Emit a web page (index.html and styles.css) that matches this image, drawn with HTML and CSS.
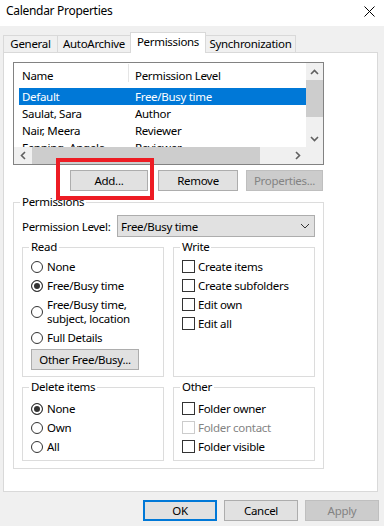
FILE: index.html
```html
<!DOCTYPE html>
<html>

<head>
    <title>Calendar Properties</title>
    <link rel="stylesheet" href="styles.css">
</head>

<body>
    <!-- Title bar -->
    <div class="titlebar">
        <span class="title">Calendar Properties</span>
        <svg class="close" width="11" height="11" viewBox="0 0 11 11">
            <path d="M0.5 0.5 L10.5 10.5 M10.5 0.5 L0.5 10.5" stroke="#000" stroke-width="1" fill="none" />
        </svg>
    </div>

    <!-- Tabs -->
    <div class="tabs">
        <div class="tab tab-general">General</div>
        <div class="tab tab-archive">AutoArchive</div>
        <div class="tab tab-permissions active">Permissions</div>
        <div class="tab tab-sync">Synchronization</div>
    </div>

    <div class="panel">
        <!-- Users list -->
        <div class="listbox">
            <div class="list-area">
                <div class="list-header">
                    <span class="head-name">Name</span>
                    <span class="head-divider"></span>
                    <span class="head-level">Permission Level</span>
                </div>
                <div class="row selected"><span class="col-name">Default</span><span>Free/Busy time</span></div>
                <div class="row"><span class="col-name">Saulat, Sara</span><span>Author</span></div>
                <div class="row"><span class="col-name">Nair, Meera</span><span>Reviewer</span></div>
                <div class="row"><span class="col-name">Fenning, Angela</span><span>Reviewer</span></div>
            </div>
            <div class="vscroll">
                <div class="arrow">
                    <svg width="9" height="6" viewBox="0 0 9 6"><path d="M1 5 L4.5 1.5 L8 5" stroke="#606060" stroke-width="1.6" fill="none" /></svg>
                </div>
                <div class="vthumb"></div>
                <div class="vspace"></div>
                <div class="arrow">
                    <svg width="9" height="6" viewBox="0 0 9 6"><path d="M1 1 L4.5 4.5 L8 1" stroke="#606060" stroke-width="1.6" fill="none" /></svg>
                </div>
            </div>
            <div class="hscroll">
                <div class="arrow">
                    <svg width="6" height="9" viewBox="0 0 6 9"><path d="M5 1 L1.5 4.5 L5 8" stroke="#606060" stroke-width="1.6" fill="none" /></svg>
                </div>
                <div class="hthumb"></div>
                <div class="hspace"></div>
                <div class="arrow">
                    <svg width="6" height="9" viewBox="0 0 6 9"><path d="M1 1 L4.5 4.5 L1 8" stroke="#606060" stroke-width="1.6" fill="none" /></svg>
                </div>
            </div>
            <div class="corner"></div>
        </div>

        <div class="list-buttons">
            <button class="btn btn-add">Add...</button>
            <button class="btn btn-remove">Remove</button>
            <button class="btn btn-props disabled">Properties...</button>
        </div>

        <!-- Highlight round the Add button -->
        <div class="highlight"></div>

        <fieldset class="group group-main">
            <legend>Permissions</legend>
            <div class="level-row">
                <span class="level-label">Permission Level:</span>
                <div class="select">
                    <span>Free/Busy time</span>
                    <svg width="10" height="6" viewBox="0 0 10 6"><path d="M1 1 L5 5 L9 1" stroke="#333" stroke-width="1" fill="none" /></svg>
                </div>
            </div>

            <div class="groups">
                <fieldset class="group group-read">
                    <legend>Read</legend>
                    <div class="opt"><span class="radio"></span>None</div>
                    <div class="opt"><span class="radio checked"></span>Free/Busy time</div>
                    <div class="opt opt-multi"><span class="radio"></span><span>Free/Busy time,<br>subject, location</span></div>
                    <div class="opt"><span class="radio"></span>Full Details</div>
                    <button class="btn btn-other">Other Free/Busy...</button>
                </fieldset>

                <fieldset class="group group-write">
                    <legend>Write</legend>
                    <div class="opt"><span class="check"></span>Create items</div>
                    <div class="opt"><span class="check"></span>Create subfolders</div>
                    <div class="opt"><span class="check"></span>Edit own</div>
                    <div class="opt"><span class="check"></span>Edit all</div>
                </fieldset>

                <fieldset class="group group-small">
                    <legend>Delete items</legend>
                    <div class="opt"><span class="radio checked"></span>None</div>
                    <div class="opt"><span class="radio"></span>Own</div>
                    <div class="opt"><span class="radio"></span>All</div>
                </fieldset>

                <fieldset class="group group-small">
                    <legend>Other</legend>
                    <div class="opt"><span class="check"></span>Folder owner</div>
                    <div class="opt disabled"><span class="check"></span>Folder contact</div>
                    <div class="opt"><span class="check"></span>Folder visible</div>
                </fieldset>
            </div>
        </fieldset>
    </div>

    <!-- Dialog buttons -->
    <div class="footer">
        <button class="btn btn-ok">OK</button>
        <button class="btn">Cancel</button>
        <button class="btn disabled">Apply</button>
    </div>
</body>

</html>
```

FILE: styles.css
```css
body {
    margin: 0;
    width: 384px;
    height: 526px;
    overflow: hidden;
    background-color: #f0f0f0;
    font-family: 'Noto Sans', 'Open Sans', sans-serif;
    font-size: 11.5px;
    letter-spacing: -0.3px;
    color: #000;
}

/* Title bar */
.titlebar {
    height: 26px;
    background-color: #fff;
    display: flex;
    justify-content: space-between;
    align-items: flex-start;
    padding: 3px 9px 0 6px;
    box-sizing: border-box;
}

.title {
    font-size: 12px;
    line-height: 16px;
}

.close {
    margin-top: 3px;
}

/* Tabs */
.tabs {
    display: flex;
    align-items: flex-end;
    height: 19px;
    margin: 7px 0 0 3px;
}

.tab {
    height: 17px;
    box-sizing: border-box;
    border: 1px solid #d9d9d9;
    border-bottom: none;
    background-color: #f0f0f0;
    text-align: center;
    line-height: 16px;
    margin-left: -1px;
}

.tab-general {
    width: 55px;
    margin-left: 0;
}

.tab-archive {
    width: 74px;
}

.tab-permissions {
    width: 76px;
}

.tab-sync {
    width: 91px;
}

.tab.active {
    height: 21px;
    background-color: #fff;
    margin-bottom: -1px;
    line-height: 18px;
    position: relative;
    z-index: 1;
}

/* Main panel */
.panel {
    position: relative;
    height: 440px;
    margin: 0 6px 0 3px;
    box-sizing: border-box;
    border: 1px solid #d9d9d9;
    background-color: #fff;
    padding: 9px 0 0 9px;
}

.listbox {
    width: 311px;
    height: 103px;
    box-sizing: border-box;
    border: 1px solid #828282;
    display: grid;
    grid-template-columns: 292px 17px;
    grid-template-rows: 84px 17px;
}

.list-area {
    overflow: hidden;
    background-color: #fff;
}

.list-header {
    height: 25px;
    display: flex;
    align-items: center;
    padding-left: 8px;
}

.head-name {
    width: 106px;
}

.head-divider {
    width: 1px;
    height: 18px;
    align-self: flex-start;
    margin-top: 1px;
    background-color: #e5e5e5;
}

.head-level {
    padding-left: 6px;
}

.row {
    height: 17px;
    margin-left: 5px;
    padding-left: 3px;
    display: flex;
    align-items: center;
    white-space: nowrap;
}

.row.selected {
    background-color: #0078d7;
    color: #fff;
}

.col-name {
    width: 113px;
}

.vscroll {
    background-color: #f0f0f0;
    display: flex;
    flex-direction: column;
}

.arrow {
    flex: 0 0 17px;
    display: flex;
    align-items: center;
    justify-content: center;
}

.vthumb {
    height: 37px;
    background-color: #cdcdcd;
}

.vspace,
.hspace {
    flex: 1;
}

.hscroll {
    background-color: #f0f0f0;
    display: flex;
}

.hthumb {
    width: 228px;
    margin-left: 1px;
    background-color: #cdcdcd;
}

.corner {
    background-color: #f0f0f0;
}

/* Buttons */
.btn {
    height: 21px;
    box-sizing: border-box;
    border: 1px solid #adadad;
    background-color: #e1e1e1;
    font-family: inherit;
    font-size: inherit;
    letter-spacing: inherit;
    color: #000;
    padding: 0;
}

.btn.disabled {
    background-color: #cccccc;
    border-color: #bfbfbf;
    color: #838383;
}

.list-buttons {
    display: flex;
    margin: 5px 0 0 57px;
}

.btn-add {
    width: 78px;
}

.btn-remove {
    width: 80px;
    margin-left: 10px;
}

.btn-props {
    width: 77px;
    margin-left: 8px;
}

.highlight {
    position: absolute;
    left: 52px;
    top: 105px;
    width: 98px;
    height: 42px;
    box-sizing: border-box;
    border: 4px solid #ed1c24;
}

/* Group boxes */
.group {
    margin: 0;
    border: 1px solid #dcdcdc;
    padding: 3px 8px 6px 8px;
    min-width: 0;
}

.group legend {
    padding: 0 2px;
    margin-left: -2px;
    line-height: 14px;
}

.group-main {
    width: 311px;
    box-sizing: border-box;
    margin-top: 4px;
    padding: 0 8px 7px 8px;
}

.level-row {
    display: flex;
    align-items: center;
    margin-top: 6px;
}

.level-label {
    width: 95px;
}

.select {
    width: 198px;
    height: 22px;
    box-sizing: border-box;
    border: 1px solid #adadad;
    background-color: #e1e1e1;
    display: flex;
    align-items: center;
    justify-content: space-between;
    padding: 0 4px 0 3px;
}

.groups {
    display: grid;
    grid-template-columns: 142px 142px;
    column-gap: 9px;
    row-gap: 3px;
    margin-top: 3px;
}

.group-small {
    padding-top: 5px;
    padding-bottom: 4px;
}

.opt {
    height: 19px;
    display: flex;
    align-items: center;
    white-space: nowrap;
}

.opt-multi {
    height: 33px;
    line-height: 14px;
}

.radio {
    flex: 0 0 auto;
    width: 12px;
    height: 12px;
    box-sizing: border-box;
    border: 1px solid #333;
    border-radius: 50%;
    margin-right: 4px;
}

.radio.checked {
    background-color: #333;
    box-shadow: inset 0 0 0 2px #fff;
}

.check {
    flex: 0 0 auto;
    width: 13px;
    height: 13px;
    box-sizing: border-box;
    border: 1px solid #333;
    margin-right: 3px;
}

.opt.disabled {
    color: #838383;
}

.opt.disabled .check {
    border-color: #cccccc;
}

.btn-other {
    width: 108px;
    margin-top: 2px;
}

/* Dialog buttons */
.footer {
    display: flex;
    justify-content: flex-end;
    gap: 7px;
    margin-top: 8px;
    padding-right: 5px;
}

.footer .btn {
    width: 74px;
}

.btn-ok {
    border: 2px solid #0078d7;
}
```
